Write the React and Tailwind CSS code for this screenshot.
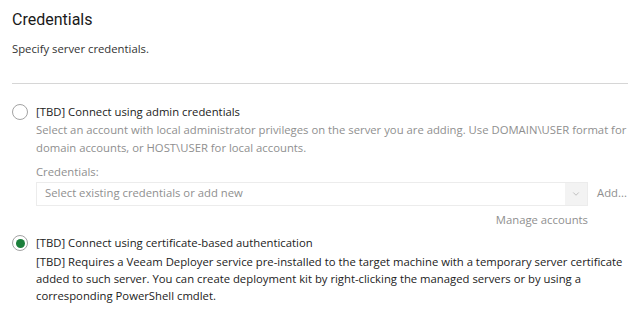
import { ChevronDown } from 'lucide-react';

const font = { fontFamily: '"Open Sans", "Noto Sans", sans-serif' };

function Radio({ checked }) {
    return (
        <span className="flex h-[16px] w-[16px] shrink-0 items-center justify-center rounded-full border border-[#a3a3a3] bg-white">
            {checked && <span className="h-[9px] w-[9px] rounded-full bg-[#1b7f3b]" />}
        </span>
    );
}

export default function App() {
    return (
        <div className="h-[328px] w-[633px] bg-white pl-[12px] pt-[8px] text-[11.3px] text-[#222]" style={font}>
            <h1 className="text-[16px] leading-[24px] text-[#1a1a1a]" style={{ fontFamily: 'Roboto, sans-serif' }}>Credentials</h1>
            <p className="mt-[9px] leading-[16px] text-[#333]">Specify server credentials.</p>
            <div className="mt-[26px] h-px w-[616px] bg-[#d6d6d6]" />

            <div className="mt-[20px]">
                <div className="flex items-center gap-[8px]">
                    <Radio />
                    <span className="text-[#222]">[TBD] Connect using admin credentials</span>
                </div>
                <div className="pl-[24px]">
                    <p className="w-[597px] leading-[18px] text-[#8f8f8f]">
                        Select an account with local administrator privileges on the server you are adding. Use DOMAIN\USER format for domain accounts, or HOST\USER for local accounts.
                    </p>
                    <p className="mt-[7px] leading-[16px] text-[#8f8f8f]">Credentials:</p>
                    <div className="mt-[2px] flex items-center">
                        <div className="flex h-[24px] w-[552px] items-center border border-[#ececec] bg-white">
                            <span className="flex-1 pl-[8px] text-[#8f8f8f]">Select existing credentials or add new</span>
                            <span className="flex h-full w-[22px] items-center justify-center bg-[#f3f3f3]">
                                <ChevronDown size={10} strokeWidth={1.5} className="text-[#a0a0a0]" />
                            </span>
                        </div>
                        <span className="ml-[9px] text-[#8f8f8f]">Add...</span>
                    </div>
                    <div className="mt-[6px] flex w-[552px] justify-end">
                        <span className="text-[#8f8f8f]">Manage accounts</span>
                    </div>
                </div>
            </div>

            <div className="mt-[6px]">
                <div className="flex items-center gap-[8px]">
                    <Radio checked />
                    <span className="text-[#222]">[TBD] Connect using certificate-based authentication</span>
                </div>
                <p className="mt-[1px] w-[621px] pl-[24px] leading-[17px] text-[#222]">
                    [TBD] Requires a Veeam Deployer service pre-installed to the target machine with a temporary server certificate added to such server. You can create deployment kit by right-clicking the managed servers or by using a corresponding PowerShell cmdlet.
                </p>
            </div>
        </div>
    );
}
